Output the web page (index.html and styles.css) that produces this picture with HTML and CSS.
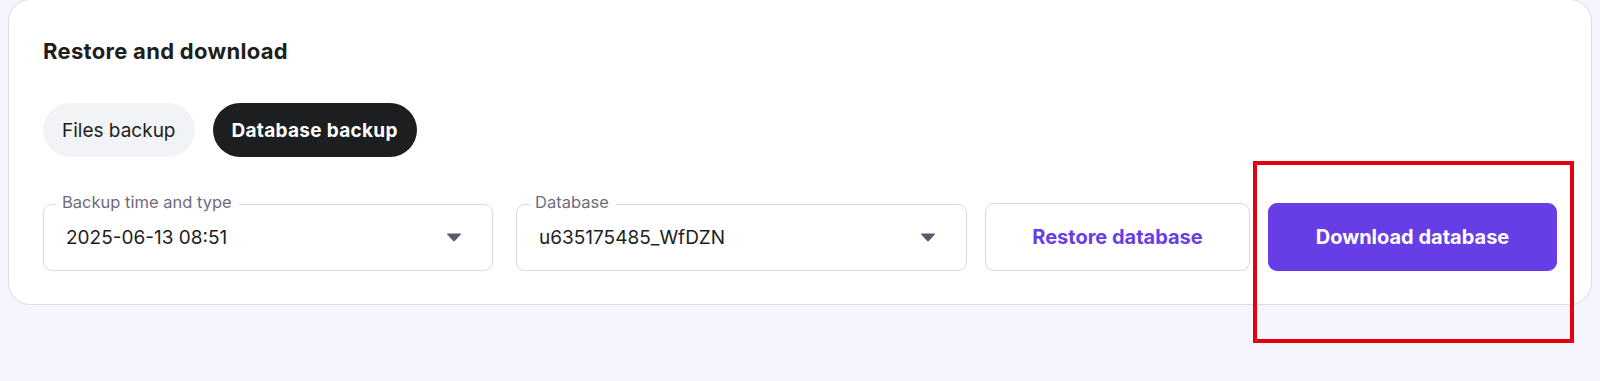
FILE: index.html
```html
<!DOCTYPE html>
<html>
<head>
    <title>Restore and download</title>
    <link rel="stylesheet" href="styles.css">
</head>
<body>
    <div class="card">
        <h2 class="card-title">Restore and download</h2>

        <div class="tabs">
            <button class="tab">Files backup</button>
            <button class="tab active">Database backup</button>
        </div>

        <div class="controls">
            <div class="field field-time">
                <span class="field-label">Backup time and type</span>
                <span class="field-value">2025-06-13 08:51</span>
                <svg class="caret" width="16" height="9" viewBox="0 0 16 9"><path d="M1.2 1.6Q0.6 0.5 1.8 0.5H14.2Q15.4 0.5 14.8 1.6L8.8 8.1Q8 9 7.2 8.1Z" fill="#5b5b69"/></svg>
            </div>
            <div class="field field-db">
                <span class="field-label">Database</span>
                <span class="field-value">u635175485_WfDZN</span>
                <svg class="caret" width="16" height="9" viewBox="0 0 16 9"><path d="M1.2 1.6Q0.6 0.5 1.8 0.5H14.2Q15.4 0.5 14.8 1.6L8.8 8.1Q8 9 7.2 8.1Z" fill="#5b5b69"/></svg>
            </div>
            <button class="btn btn-outline">Restore database</button>
            <button class="btn btn-primary">Download database</button>
        </div>
    </div>

    <div class="highlight"></div>
</body>
</html>
```

FILE: styles.css
```css
body {
    font-family: Inter, 'Noto Sans', sans-serif;
    background-color: #f4f5fd;
    margin: 0;
    color: #1d1e20;
    height: 381px;
    overflow: hidden;
    position: relative;
}
.card {
    margin: -1px 8px 0 8px;
    background: white;
    border: 1px solid #dcdde3;
    border-radius: 22px;
    padding: 38px 34px 33px 34px;
}
.card-title {
    margin: 0;
    font-size: 22px;
    font-weight: 700;
    line-height: 26px;
    letter-spacing: 0.3px;
}
.tabs {
    display: flex;
    gap: 18px;
    margin-top: 39px;
}
.tab {
    font-family: inherit;
    font-size: 19px;
    font-weight: 400;
    height: 54px;
    padding: 0 19px;
    border: none;
    border-radius: 27px;
    background: #f2f3f6;
    color: #1d1e20;
}
.tab.active {
    background: #1d1e20;
    color: white;
    font-weight: 700;
    letter-spacing: 0.3px;
}
.controls {
    display: flex;
    align-items: center;
    gap: 18px;
    margin-top: 46px;
}
.field {
    position: relative;
    height: 67px;
    box-sizing: border-box;
    border: 1px solid #d8d9de;
    border-radius: 9px;
    display: flex;
    align-items: center;
    padding: 0 30px 0 22px;
}
.field-time { width: 450px; margin-right: 5px; }
.field-db { width: 451px; }
.field-label {
    position: absolute;
    top: -13px;
    left: 13px;
    padding: 0 7px 0 5px;
    background: white;
    font-size: 16.5px;
    line-height: 20px;
    color: #6d6d7a;
}
.field-value {
    flex: 1;
    font-size: 19px;
    color: #1d1e20;
}
.btn {
    font-family: inherit;
    font-size: 20px;
    font-weight: 700;
    height: 68px;
    border-radius: 9px;
}
.btn-outline {
    width: 265px;
    background: white;
    border: 1px solid #d8d9de;
    color: #673de6;
}
.btn-primary {
    width: 289px;
    background: #673de6;
    border: 1px solid #673de6;
    color: white;
}
.highlight {
    position: absolute;
    left: 1253px;
    top: 161px;
    width: 321px;
    height: 182px;
    box-sizing: border-box;
    border: 4px solid #e3000f;
}
```
